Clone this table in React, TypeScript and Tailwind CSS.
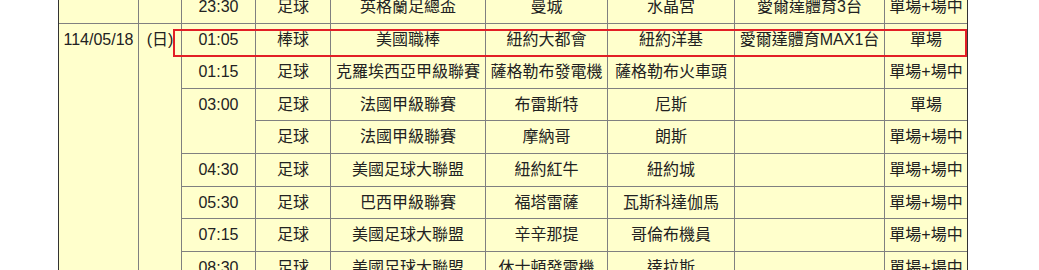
type Row = {
  time?: string
  sport: string
  league: string
  home: string
  away: string
  channel: string
  bet: string
}

const rows: Row[] = [
  { time: '01:05', sport: '棒球', league: '美國職棒', home: '紐約大都會', away: '紐約洋基', channel: '愛爾達體育MAX1台', bet: '單場' },
  { time: '01:15', sport: '足球', league: '克羅埃西亞甲級聯賽', home: '薩格勒布發電機', away: '薩格勒布火車頭', channel: '', bet: '單場+場中' },
  { time: '03:00', sport: '足球', league: '法國甲級聯賽', home: '布雷斯特', away: '尼斯', channel: '', bet: '單場' },
  { sport: '足球', league: '法國甲級聯賽', home: '摩納哥', away: '朗斯', channel: '', bet: '單場+場中' },
  { time: '04:30', sport: '足球', league: '美國足球大聯盟', home: '紐約紅牛', away: '紐約城', channel: '', bet: '單場+場中' },
  { time: '05:30', sport: '足球', league: '巴西甲級聯賽', home: '福塔雷薩', away: '瓦斯科達伽馬', channel: '', bet: '單場+場中' },
  { time: '07:15', sport: '足球', league: '美國足球大聯盟', home: '辛辛那提', away: '哥倫布機員', channel: '', bet: '單場+場中' },
  { time: '08:30', sport: '足球', league: '美國足球大聯盟', home: '休士頓發電機', away: '達拉斯', channel: '', bet: '單場+場中' },
]

const cell = 'bg-[#ffffcc] flex items-center justify-center whitespace-nowrap leading-6'
const topCell = 'bg-[#ffffcc] flex justify-center whitespace-nowrap leading-6 pt-[4px]'

export default function App() {
  return (
    <div
      className="relative flex flex-col h-[270px] overflow-hidden bg-white text-[16px] text-[#222]"
      style={{ fontFamily: '"Liberation Sans", "Noto Sans CJK TC", sans-serif' }}
    >
      <div className="-mt-[9px] ml-[58px] w-fit grid grid-cols-[79px_42px_73px_74px_154px_121px_126px_149px_82px] grid-rows-[32px_31px_32px_31px_32px_32px_31px_32px_32px] gap-px bg-[#808080] border-x border-[#333]">
        {/* previous day, last match */}
        <div className="bg-[#ffffcc]" />
        <div className="bg-[#ffffcc]" />
        <div className={cell}>23:30</div>
        <div className={cell}>足球</div>
        <div className={cell}>英格蘭足總盃</div>
        <div className={cell}>曼城</div>
        <div className={cell}>水晶宮</div>
        <div className={cell}>愛爾達體育3台</div>
        <div className={cell}>單場+場中</div>

        {/* 114/05/18 */}
        <div className={`${topCell} col-start-1 row-start-2 row-span-8`}>114/05/18</div>
        <div className={`${topCell} col-start-2 row-start-2 row-span-8`}>(日)</div>

        {rows.map((r, i) => (
          <div key={i} className="contents">
            {r.time === '03:00' && (
              <div className={`${topCell} col-start-3 row-span-2`}>{r.time}</div>
            )}
            {r.time && r.time !== '03:00' && <div className={`${cell} col-start-3`}>{r.time}</div>}
            <div className={`${cell} col-start-4`}>{r.sport}</div>
            <div className={cell}>{r.league}</div>
            <div className={cell}>{r.home}</div>
            <div className={cell}>{r.away}</div>
            <div className={cell}>{r.channel}</div>
            <div className={cell}>{r.bet}</div>
          </div>
        ))}
      </div>

      {/* highlight box */}
      <div className="absolute left-[173px] top-[29px] w-[794px] h-[28px] border-2 border-[#e21f26] pointer-events-none" />
    </div>
  )
}
